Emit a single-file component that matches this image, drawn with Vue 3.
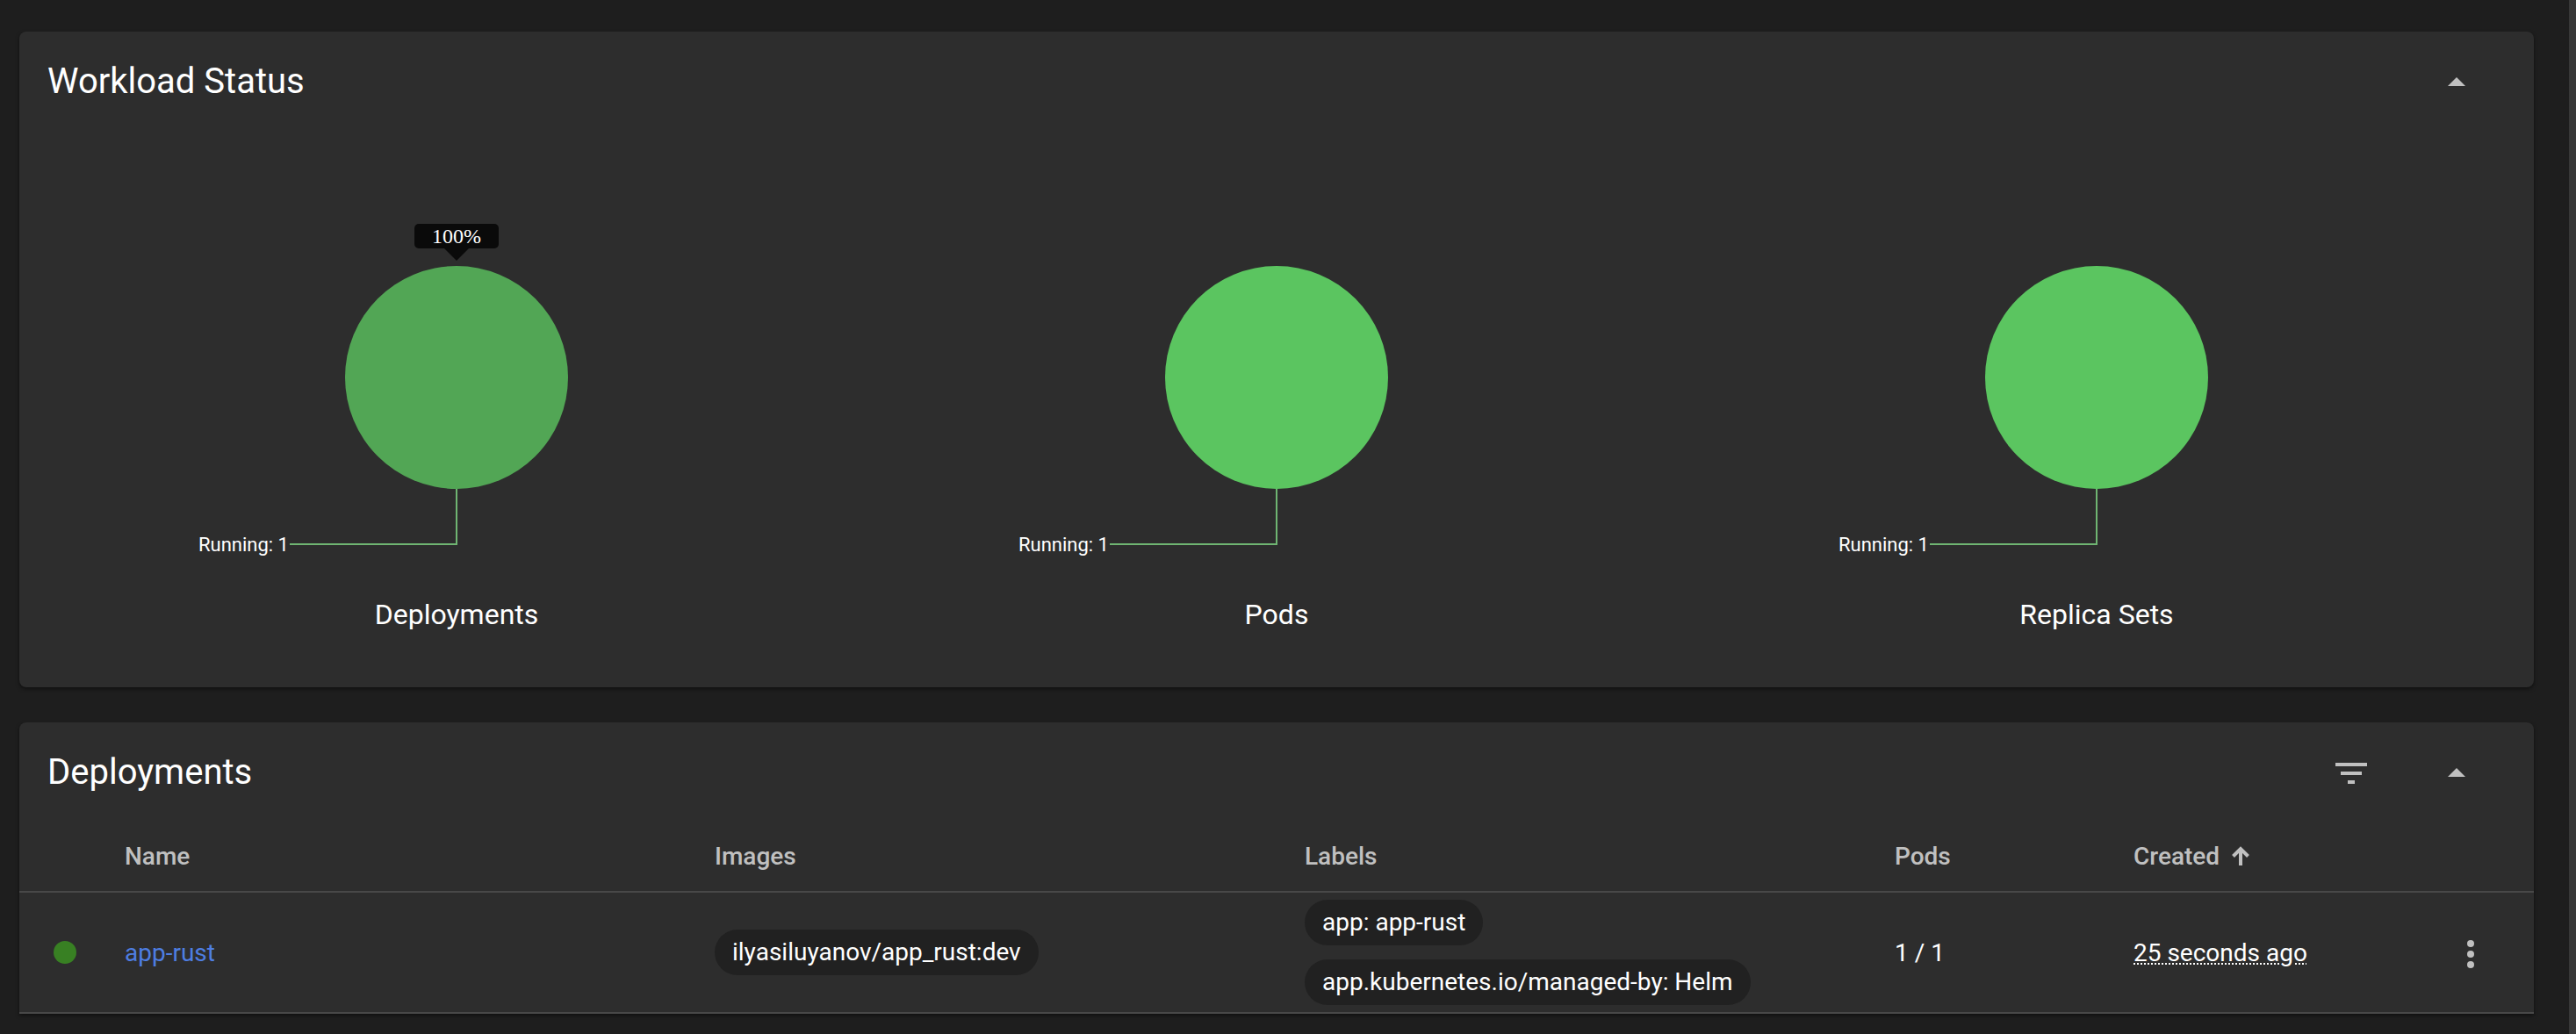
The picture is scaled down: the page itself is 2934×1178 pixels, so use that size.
<script setup>
import { ref } from 'vue'

const charts = [
  { title: 'Deployments', label: 'Running: 1', percent: '100%', active: true },
  { title: 'Pods', label: 'Running: 1' },
  { title: 'Replica Sets', label: 'Running: 1' },
]

const deployments = [
  {
    name: 'app-rust',
    images: ['ilyasiluyanov/app_rust:dev'],
    labels: ['app: app-rust', 'app.kubernetes.io/managed-by: Helm'],
    pods: '1 / 1',
    created: '25 seconds ago',
  },
]

const statusOpen = ref(true)
const listOpen = ref(true)
</script>

<template>
  <main class="page">
    <section class="card">
      <header class="card-header">
        <h2 class="card-title">Workload Status</h2>
        <div class="actions">
          <button class="icon-button" type="button" aria-label="Collapse workload status" @click="statusOpen = !statusOpen">
            <svg class="icon" viewBox="0 0 24 24"><path d="M7 14l5-5 5 5z" /></svg>
          </button>
        </div>
      </header>
      <div v-if="statusOpen" class="charts">
        <figure v-for="chart in charts" :key="chart.title" class="chart">
          <div class="plot">
            <svg class="pie" :class="{ active: chart.active }" width="600" height="340" viewBox="0 0 600 340">
              <circle cx="300" cy="127" r="127" />
              <polyline points="300,254 300,317 110,317" />
              <text x="109" y="325" text-anchor="end">{{ chart.label }}</text>
            </svg>
            <span v-if="chart.percent" class="tooltip">{{ chart.percent }}</span>
          </div>
          <figcaption class="chart-title">{{ chart.title }}</figcaption>
        </figure>
      </div>
    </section>

    <section class="card list">
      <header class="card-header">
        <h2 class="card-title">Deployments</h2>
        <div class="actions">
          <button class="icon-button" type="button" aria-label="Filter">
            <svg class="icon" viewBox="0 0 24 24"><path d="M10 18h4v-2h-4v2zM3 6v2h18V6H3zm3 7h12v-2H6v2z" /></svg>
          </button>
          <button class="icon-button" type="button" aria-label="Collapse deployments" @click="listOpen = !listOpen">
            <svg class="icon" viewBox="0 0 24 24"><path d="M7 14l5-5 5 5z" /></svg>
          </button>
        </div>
      </header>
      <table v-if="listOpen" class="table">
        <colgroup>
          <col class="col-status" />
          <col />
          <col />
          <col />
          <col class="col-pods" />
          <col class="col-created" />
          <col class="col-menu" />
        </colgroup>
        <thead>
          <tr>
            <th></th>
            <th>Name</th>
            <th>Images</th>
            <th>Labels</th>
            <th>Pods</th>
            <th>
              <button class="sort" type="button">
                Created
                <svg class="sort-arrow" viewBox="0 0 24 24"><path d="M12 23V4M3.5 12.5L12 4l8.5 8.5" /></svg>
              </button>
            </th>
            <th></th>
          </tr>
        </thead>
        <tbody>
          <tr v-for="item in deployments" :key="item.name">
            <td class="status">
              <svg class="dot" viewBox="0 0 26 26"><circle cx="13" cy="13" r="13" /></svg>
            </td>
            <td><a class="link" href="#">{{ item.name }}</a></td>
            <td>
              <div class="chips">
                <span v-for="image in item.images" :key="image" class="chip">{{ image }}</span>
              </div>
            </td>
            <td>
              <div class="chips">
                <span v-for="label in item.labels" :key="label" class="chip">{{ label }}</span>
              </div>
            </td>
            <td>{{ item.pods }}</td>
            <td><span class="date">{{ item.created }}</span></td>
            <td>
              <button class="icon-button menu" type="button" aria-label="Actions">
                <svg class="icon" viewBox="0 0 24 24">
                  <circle cx="12" cy="6" r="2" /><circle cx="12" cy="12" r="2" /><circle cx="12" cy="18" r="2" />
                </svg>
              </button>
            </td>
          </tr>
        </tbody>
      </table>
    </section>
  </main>
</template>

<style>
body {
  background: #1e1e1e;
}
</style>

<style scoped>
.page {
  box-sizing: border-box;
  min-height: 100vh;
  padding: 36px 40px 24px 22px;
  border-right: 8px solid #383838;
  display: flex;
  flex-direction: column;
  gap: 40px;
  background: #1e1e1e;
  color: #fff;
  font-family: Roboto, sans-serif;
  font-size: 28px;
}

.card {
  border-radius: 8px;
  background: #2d2d2d;
  box-shadow: 0 2px 4px rgba(0, 0, 0, 0.5);
}

.list {
  border-radius: 8px 8px 0 0;
}

.card-header {
  display: flex;
  justify-content: space-between;
  height: 112px;
  padding: 0 48px 0 32px;
}

.card-title {
  margin: 0;
  font-size: 40px;
  font-weight: 400;
  line-height: 114px;
}

.actions {
  display: flex;
  gap: 40px;
  padding-top: 18px;
}

.icon-button {
  display: flex;
  align-items: center;
  justify-content: center;
  width: 80px;
  height: 80px;
  padding: 0;
  border: 0;
  background: none;
  color: #c0c0c0;
  cursor: pointer;
}

.icon {
  width: 48px;
  height: 48px;
  fill: currentColor;
}

.charts {
  display: grid;
  grid-template-columns: repeat(3, 1fr);
  padding: 155px 31px 63px;
}

.chart {
  display: flex;
  flex-direction: column;
  align-items: center;
  gap: 37px;
  margin: 0;
}

.plot {
  position: relative;
}

.pie {
  display: block;
  fill: #5bc560;
}

.pie.active {
  fill: #52a655;
}

.pie polyline {
  fill: none;
  stroke: #6fb572;
  stroke-width: 2px;
}

.pie text {
  fill: #fff;
  font-size: 22px;
}

.tooltip {
  position: absolute;
  bottom: 100%;
  left: 50%;
  width: 96px;
  margin-bottom: 20px;
  border-radius: 5px;
  background: #0a0a0a;
  font-family: "Liberation Serif", serif;
  font-size: 24px;
  line-height: 28px;
  text-align: center;
  transform: translateX(-50%);
}

.tooltip::after {
  content: "";
  position: absolute;
  top: 100%;
  left: 50%;
  margin-left: -14px;
  border: 14px solid transparent;
  border-top-color: #0a0a0a;
  border-bottom: 0;
}

.chart-title {
  font-size: 32px;
  line-height: 40px;
}

.table {
  width: 100%;
  border-collapse: separate;
  border-spacing: 0;
  table-layout: fixed;
}

.col-status {
  width: 120px;
}

.col-pods {
  width: 272px;
}

.col-created {
  width: 344px;
}

.col-menu {
  width: 112px;
}

th,
td {
  padding: 0;
  border-bottom: 2px solid #484848;
  text-align: left;
  vertical-align: middle;
}

th {
  height: 80px;
  color: #c0c0c0;
  font-weight: 500;
}

td {
  height: 136px;
}

.sort {
  display: flex;
  align-items: center;
  gap: 12px;
  padding: 0;
  border: 0;
  background: none;
  color: inherit;
  font: inherit;
  cursor: pointer;
}

.sort-arrow {
  width: 24px;
  height: 24px;
  fill: none;
  stroke: currentColor;
  stroke-width: 4px;
}

.status {
  padding-left: 39px;
}

.dot {
  display: block;
  width: 26px;
  height: 26px;
  fill: #388023;
}

.link {
  color: #4e7ee2;
  text-decoration: none;
}

.chips {
  display: flex;
  flex-direction: column;
  align-items: flex-start;
  gap: 16px;
}

.chip {
  padding: 0 20px;
  border-radius: 26px;
  background: #212121;
  line-height: 52px;
}

.date {
  text-decoration: underline dotted 2px;
  text-underline-offset: 3px;
}

.menu {
  padding-top: 4px;
}
</style>
